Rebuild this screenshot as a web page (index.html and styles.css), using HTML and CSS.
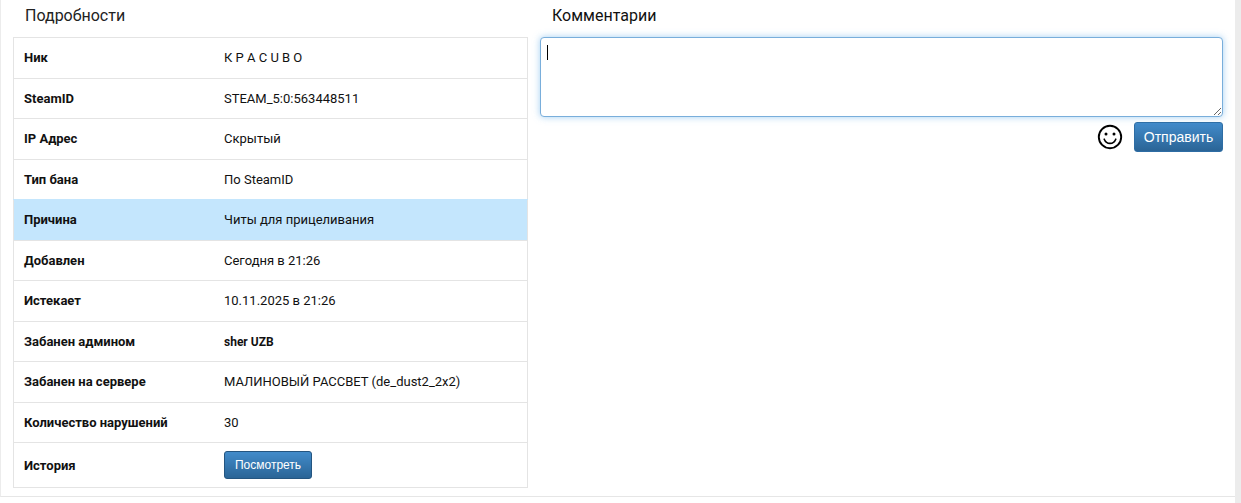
FILE: index.html
```html
<!DOCTYPE html>
<html lang="ru">
<head>
<meta charset="utf-8">
<title>Подробности</title>
<link rel="stylesheet" href="styles.css">
</head>
<body>
<div class="page">
<div class="panel">
  <section class="details">
    <h4 class="title">Подробности</h4>
    <table class="info">
      <tr><th>Ник</th><td>К Р А С U В О</td></tr>
      <tr><th>SteamID</th><td>STEAM_5:0:563448511</td></tr>
      <tr><th>IP Адрес</th><td>Скрытый</td></tr>
      <tr><th>Тип бана</th><td>По SteamID</td></tr>
      <tr class="hl"><th>Причина</th><td>Читы для прицеливания</td></tr>
      <tr><th>Добавлен</th><td>Сегодня в 21:26</td></tr>
      <tr><th>Истекает</th><td>10.11.2025 в 21:26</td></tr>
      <tr><th>Забанен админом</th><td><b class="admin">sher UZB</b></td></tr>
      <tr><th>Забанен на сервере</th><td>МАЛИНОВЫЙ РАССВЕТ (de_dust2_2x2)</td></tr>
      <tr><th>Количество нарушений</th><td>30</td></tr>
      <tr class="last"><th>История</th><td><button class="btn btn-sm" type="button">Посмотреть</button></td></tr>
    </table>
  </section>
  <section class="comments">
    <h4 class="title title-c">Комментарии</h4>
    <div class="box"><textarea class="input"></textarea><span class="caret"></span></div>
    <div class="actions">
      <svg class="smile" width="26" height="26" viewBox="0 0 26 26" fill="none" stroke="#000">
        <circle cx="13" cy="13" r="11.2" stroke-width="1.9"/>
        <circle cx="9" cy="10" r="1.5" fill="#000" stroke="none"/>
        <circle cx="17" cy="10" r="1.5" fill="#000" stroke="none"/>
        <path d="M7.2 15.2c1.2 2.9 3.2 4.2 5.8 4.2s4.6-1.3 5.8-4.2" stroke-width="1.6" stroke-linecap="round"/>
      </svg>
      <button class="btn" type="button">Отправить</button>
    </div>
  </section>
</div>
</div>
</body>
</html>
```
FILE: styles.css
```css
html, body {
  margin: 0;
  height: 503px;
  overflow: hidden;
  background: #ececec;
}
body {
  font-family: Roboto, "Liberation Sans", sans-serif;
  font-size: 13px;
  color: #111;
}
.page {
  width: 1235px;
  height: 503px;
  background: #fff;
}
.panel {
  display: flex;
  box-sizing: border-box;
  width: 1235px;
  height: 497px;
  padding: 0 12px 0 13px;
  gap: 12px;
  border-left: 1px solid #ececec;
  border-bottom: 1px solid #e6e6e6;
}
.details { width: 515px; flex: none; margin-left: -1px; }
.comments { flex: 1; min-width: 0; }
.title {
  margin: 0;
  height: 37px;
  padding: 6px 0 0 12px;
  box-sizing: border-box;
  font-size: 16px;
  line-height: 20px;
  font-weight: 400;
  color: #222;
}
.title-c { color: #111; }
.info {
  width: 515px;
  border-collapse: collapse;
  table-layout: fixed;
  border: 1px solid #e4e4e4;
}
.info tr { height: 40.5px; }
.info tr.last { height: 45px; }
.info th, .info td {
  padding: 1px 10px 0;
  text-align: left;
  border-top: 1px solid #e4e4e4;
  font-size: 13px;
  line-height: 18px;
  color: #111;
}
.info th { width: 180px; font-weight: 700; }
.admin { font-size: 12px; }
.hl th, .hl td { background: #c4e6fd; border-top-color: #c4e6fd; }
.box { position: relative; height: 80px; }
.input {
  display: block;
  box-sizing: border-box;
  width: 100%;
  height: 80px;
  padding: 6px;
  border: 1px solid #79aedb;
  border-radius: 4px;
  outline: none;
  background: #fff;
  box-shadow: 0 0 7px rgba(102, 175, 233, .6);
}
.caret {
  position: absolute;
  left: 7px;
  top: 8px;
  width: 1px;
  height: 15px;
  background: #000;
}
.actions {
  display: flex;
  justify-content: flex-end;
  align-items: center;
  gap: 11px;
  margin-top: 5px;
}
.btn {
  height: 30px;
  width: 89px;
  padding: 0;
  border: 1px solid #2e6da4;
  border-radius: 3px;
  background: linear-gradient(#428bca, #2a6496);
  color: #fff;
  font-family: "Liberation Sans", Arial, sans-serif;
  font-size: 14px;
}
.btn-sm {
  display: block;
  width: 88px;
  height: 28px;
  font-size: 12px;
  border-color: #245580;
  margin-top: -1px;
}
```
